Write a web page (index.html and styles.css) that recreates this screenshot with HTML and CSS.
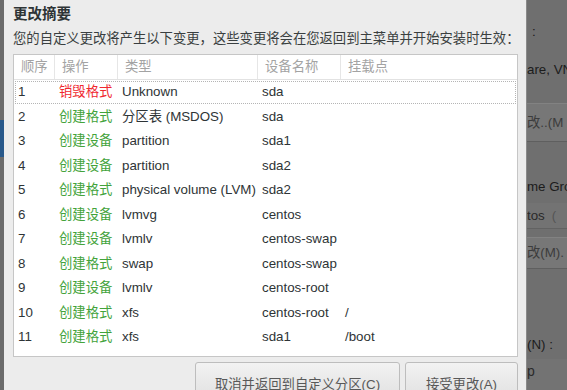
FILE: index.html
```html
<!DOCTYPE html>
<html lang="zh-CN">
<head>
    <meta charset="UTF-8">
    <title>更改摘要</title>
    <link rel="stylesheet" href="styles.css">
</head>
<body>

<div class="edge">
    <div class="edge-blue"></div>
</div>

<div class="dialog">
    <h1 class="title">更改摘要</h1>
    <p class="subtitle">您的自定义更改将产生以下变更，这些变更将会在您返回到主菜单并开始安装时生效：</p>

    <div class="changes">
        <div class="row head">
            <span>顺序</span><span>操作</span><span>类型</span><span>设备名称</span><span>挂载点</span>
        </div>
        <div class="row focus">
            <span>1</span><span class="destroy">销毁格式</span><span>Unknown</span><span>sda</span><span></span>
        </div>
        <div class="row">
            <span>2</span><span class="create">创建格式</span><span>分区表 (MSDOS)</span><span>sda</span><span></span>
        </div>
        <div class="row">
            <span>3</span><span class="create">创建设备</span><span>partition</span><span>sda1</span><span></span>
        </div>
        <div class="row">
            <span>4</span><span class="create">创建设备</span><span>partition</span><span>sda2</span><span></span>
        </div>
        <div class="row">
            <span>5</span><span class="create">创建格式</span><span>physical volume (LVM)</span><span>sda2</span><span></span>
        </div>
        <div class="row">
            <span>6</span><span class="create">创建设备</span><span>lvmvg</span><span>centos</span><span></span>
        </div>
        <div class="row">
            <span>7</span><span class="create">创建设备</span><span>lvmlv</span><span>centos-swap</span><span></span>
        </div>
        <div class="row">
            <span>8</span><span class="create">创建格式</span><span>swap</span><span>centos-swap</span><span></span>
        </div>
        <div class="row">
            <span>9</span><span class="create">创建设备</span><span>lvmlv</span><span>centos-root</span><span></span>
        </div>
        <div class="row">
            <span>10</span><span class="create">创建格式</span><span>xfs</span><span>centos-root</span><span>/</span>
        </div>
        <div class="row">
            <span>11</span><span class="create">创建格式</span><span>xfs</span><span>sda1</span><span>/boot</span>
        </div>
    </div>

    <div class="actions">
        <button class="btn btn-cancel">取消并返回到自定义分区(<u>C</u>)</button>
        <button class="btn btn-accept">接受更改(<u>A</u>)</button>
    </div>
</div>

<div class="backdrop">
    <div class="bd-line bd-colon">:</div>
    <div class="bd-line bd-vm"><span class="cut">are, VN</span></div>
    <div class="bd-button bd-modify1"><span class="cut">改..(M</span></div>
    <div class="bd-line bd-group"><span class="cut">me Gro</span></div>
    <div class="bd-field bd-centos"><span class="cut">tos</span><span class="bd-paren">(</span></div>
    <div class="bd-button bd-modify2"><span class="cut">改(M).</span></div>
    <div class="bd-line bd-name"><span class="cut">(N) :</span></div>
    <div class="bd-field bd-swap"><span class="cut">p</span></div>
</div>

</body>
</html>
```

FILE: styles.css
```css
body {
    margin: 0;
    width: 567px;
    height: 390px;
    overflow: hidden;
    display: flex;
    font-family: "Liberation Sans", "Noto Sans CJK SC", sans-serif;
    color: #2e3436;
    background-color: #6f6f6f;
}

/* sliver of the window behind, on the left */
.edge {
    width: 4px;
    flex: 0 0 4px;
    background-color: #6b6b6b;
    padding-top: 120px;
}
.edge-blue {
    height: 37px;
    background-color: #28588a;
}

.dialog {
    flex: 0 0 523px;
    min-width: 0;
    box-sizing: border-box;
    overflow: hidden;
    background-color: #ececec;
    padding: 0 0 0 9px;
    border-right: 1px solid #8a8a8a;
}
.title {
    margin: 6px 0 0 0;
    font-size: 14.5px;
    line-height: 17px;
    font-weight: bold;
    color: #2e3436;
}
.subtitle {
    margin: 0;
    padding-top: 7px;
    font-size: 13.33px;
    line-height: 17px;
    color: #3a3f40;
    white-space: nowrap;
}

.changes {
    margin-top: 7px;
    width: 503px;
    height: 301px;
    background-color: #fff;
    border: 1px solid #c6c6c6;
    font-size: 13.33px;
}
.row {
    display: grid;
    grid-template-columns: 40px 63px 140px 83px 1fr;
    height: 24.5px;
    line-height: 24.5px;
    white-space: nowrap;
}
.row span {
    padding-left: 5px;
    overflow: hidden;
}
.row span:first-child {
    padding-left: 4px;
}
.row.head {
    height: 25px;
    line-height: 24px;
    box-sizing: border-box;
    border-bottom: 1px solid #e2e2e2;
    color: #a3a3a3;
}
.row.head span {
    padding-left: 7px;
    border-left: 1px solid #e6e6e6;
}
.row.head span:first-child {
    border-left: none;
}
.row.focus {
    outline: 1px dotted #b5b5b5;
    outline-offset: -2px;
}
.destroy {
    color: #f0282f;
}
.create {
    color: #43a33b;
}

.actions {
    display: flex;
    gap: 5px;
    margin-top: 5px;
    padding-left: 182px;
}
.btn {
    font-family: "Liberation Sans", "Noto Sans CJK SC", sans-serif;
    font-size: 13.33px;
    color: #585858;
    height: 36px;
    padding: 6px 0 0 0;
    border: 1px solid #bdbdbd;
    border-radius: 3px;
    background: linear-gradient(#f2f2f2, #e2e2e2);
}
.btn-cancel {
    width: 205px;
}
.btn-accept {
    width: 113px;
}

/* darkened main window showing to the right */
.backdrop {
    flex: 1;
    min-width: 0;
    overflow: hidden;
    font-size: 13.33px;
    color: #1c1c1c;
    display: flex;
    flex-direction: column;
}
.cut {
    display: block;
    white-space: nowrap;
}
.bd-colon {
    margin-top: 23px;
    padding-left: 5px;
    line-height: 17px;
}
.bd-vm {
    margin-top: 21px;
    line-height: 17px;
}
.bd-button {
    background-color: #777;
    border-top: 1px solid #828282;
    border-bottom: 1px solid #5f5f5f;
    color: #3c3c3c;
}
.bd-modify1 {
    margin-top: 25px;
    height: 37px;
    line-height: 37px;
}
.bd-group {
    margin-top: 36px;
    line-height: 17px;
}
.bd-field {
    display: flex;
    background-color: #737373;
    color: #2a2a2a;
}
.bd-centos {
    margin-top: 8px;
    height: 25px;
    line-height: 25px;
    border-bottom: 1px solid #626262;
}
.bd-paren {
    padding-left: 7px;
    color: #555;
}
.bd-modify2 {
    margin-top: 8px;
    height: 30px;
    line-height: 30px;
}
.bd-name {
    margin-top: 67px;
    line-height: 17px;
}
.bd-swap {
    margin-top: 6px;
    height: 40px;
    line-height: 24px;
    font-size: 14px;
}
```
